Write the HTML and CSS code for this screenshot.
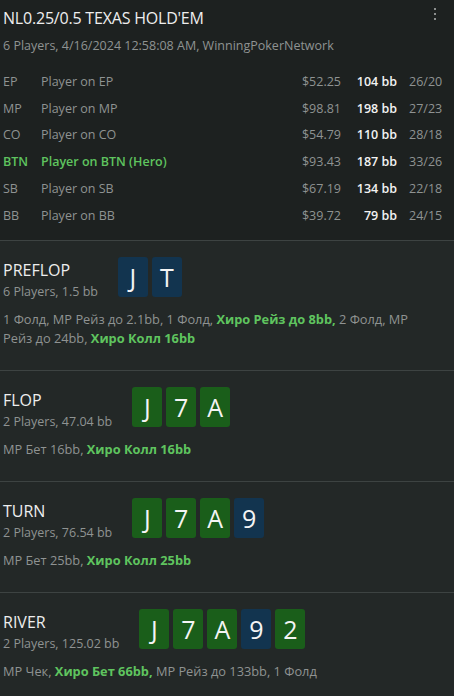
FILE: index.html
```html
<!DOCTYPE html>
<html lang="ru">
<head>
  <meta charset="UTF-8" />
  <meta name="viewport" content="width=device-width, initial-scale=1" />
  <title>Hand History</title>
  <link rel="stylesheet" href="styles.css">
</head>
<body>
  <div class="hand">
    <div class="hand-header">
      <div class="title-row">
        <h1>NL0.25/0.5 TEXAS HOLD'EM</h1>
        <svg class="menu" width="4" height="14" viewBox="0 0 4 14">
          <rect x="1" y="1" width="2" height="2" fill="#8c8f8e"/>
          <rect x="1" y="6" width="2" height="2" fill="#8c8f8e"/>
          <rect x="1" y="11" width="2" height="2" fill="#8c8f8e"/>
        </svg>
      </div>
      <div class="meta">6 Players, 4/16/2024 12:58:08 AM, WinningPokerNetwork</div>

      <div class="players">
        <div class="player">
          <span class="pos">EP</span><span class="name">Player on EP</span>
          <span class="money">$52.25</span><span class="bb">104 bb</span><span class="stat">26/20</span>
        </div>
        <div class="player">
          <span class="pos">MP</span><span class="name">Player on MP</span>
          <span class="money">$98.81</span><span class="bb">198 bb</span><span class="stat">27/23</span>
        </div>
        <div class="player">
          <span class="pos">CO</span><span class="name">Player on CO</span>
          <span class="money">$54.79</span><span class="bb">110 bb</span><span class="stat">28/18</span>
        </div>
        <div class="player hero">
          <span class="pos">BTN</span><span class="name">Player on BTN (Hero)</span>
          <span class="money">$93.43</span><span class="bb">187 bb</span><span class="stat">33/26</span>
        </div>
        <div class="player">
          <span class="pos">SB</span><span class="name">Player on SB</span>
          <span class="money">$67.19</span><span class="bb">134 bb</span><span class="stat">22/18</span>
        </div>
        <div class="player">
          <span class="pos">BB</span><span class="name">Player on BB</span>
          <span class="money">$39.72</span><span class="bb">79 bb</span><span class="stat">24/15</span>
        </div>
      </div>
    </div>

    <div class="street">
      <div class="street-head">
        <div class="street-info">
          <div class="street-name">PREFLOP</div>
          <div class="street-pot">6 Players, 1.5 bb</div>
        </div>
        <div class="cards">
          <div class="card blue">J</div>
          <div class="card blue">T</div>
        </div>
      </div>
      <div class="actions">1 Фолд, MP Рейз до 2.1bb, 1 Фолд, <b>Хиро Рейз до 8bb,</b> 2 Фолд, MP Рейз до 24bb, <b>Хиро Колл 16bb</b></div>
    </div>

    <div class="street">
      <div class="street-head">
        <div class="street-info">
          <div class="street-name">FLOP</div>
          <div class="street-pot">2 Players, 47.04 bb</div>
        </div>
        <div class="cards">
          <div class="card green">J</div>
          <div class="card green">7</div>
          <div class="card green">A</div>
        </div>
      </div>
      <div class="actions">MP Бет 16bb, <b>Хиро Колл 16bb</b></div>
    </div>

    <div class="street">
      <div class="street-head">
        <div class="street-info">
          <div class="street-name">TURN</div>
          <div class="street-pot">2 Players, 76.54 bb</div>
        </div>
        <div class="cards">
          <div class="card green">J</div>
          <div class="card green">7</div>
          <div class="card green">A</div>
          <div class="card blue">9</div>
        </div>
      </div>
      <div class="actions">MP Бет 25bb, <b>Хиро Колл 25bb</b></div>
    </div>

    <div class="street">
      <div class="street-head">
        <div class="street-info">
          <div class="street-name">RIVER</div>
          <div class="street-pot">2 Players, 125.02 bb</div>
        </div>
        <div class="cards">
          <div class="card green">J</div>
          <div class="card green">7</div>
          <div class="card green">A</div>
          <div class="card blue">9</div>
          <div class="card green">2</div>
        </div>
      </div>
      <div class="actions">MP Чек, <b>Хиро Бет 66bb,</b> MP Рейз до 133bb, 1 Фолд</div>
    </div>
  </div>
</body>
</html>
```

FILE: styles.css
```css
body {
  margin: 0;
  background: #232827;
  font-family: 'Open Sans', 'Noto Sans', sans-serif;
  color: #e6e8e7;
}
.hand-header {
  background: #1d2120;
  padding: 6px 5px 11px 3px;
}
.title-row {
  display: flex;
  justify-content: space-between;
  align-items: flex-start;
}
h1 {
  margin: 0;
  font-size: 16px;
  font-weight: 400;
  line-height: 24px;
  letter-spacing: -0.2px;
  color: #eeeeee;
}
.menu {
  margin: 1px 12px 0 0;
}
.meta {
  margin-top: 7px;
  font-size: 12.5px;
  line-height: 18px;
  color: #8f9392;
}
.players {
  margin-top: 13px;
}
.player {
  display: grid;
  grid-template-columns: 26px 1fr auto 44px 40px;
  column-gap: 12px;
  align-items: center;
  height: 26.8px;
  font-size: 12.5px;
  color: #8f9392;
}
.player .money {
  text-align: right;
}
.player .bb {
  text-align: right;
  font-weight: 600;
  color: #f2f2f2;
}
.player.hero .pos,
.player.hero .name {
  color: #5fc45f;
  font-weight: 600;
}
.street {
  border-top: 1px solid #3d4342;
  padding: 16px 30px 21.5px 3px;
}
.street-head {
  display: flex;
  align-items: flex-start;
}
.street-info {
  margin: 2px 20px 0 0;
}
.street-name {
  font-size: 16px;
  line-height: 22px;
  color: #eeeeee;
}
.street-pot {
  font-size: 12.5px;
  line-height: 22px;
  color: #8f9392;
}
.cards {
  display: flex;
  gap: 4px;
}
.card {
  width: 30px;
  height: 40px;
  border-radius: 3px;
  display: flex;
  align-items: center;
  justify-content: center;
  font-size: 25px;
  color: #f4f4f4;
}
.card.green {
  background: #1a5e1a;
}
.card.blue {
  background: #12344f;
}
.actions {
  margin-top: 7px;
  font-size: 12.8px;
  line-height: 19.5px;
  color: #8f9392;
}
.actions b {
  color: #5fc45f;
  font-weight: 700;
}
```
